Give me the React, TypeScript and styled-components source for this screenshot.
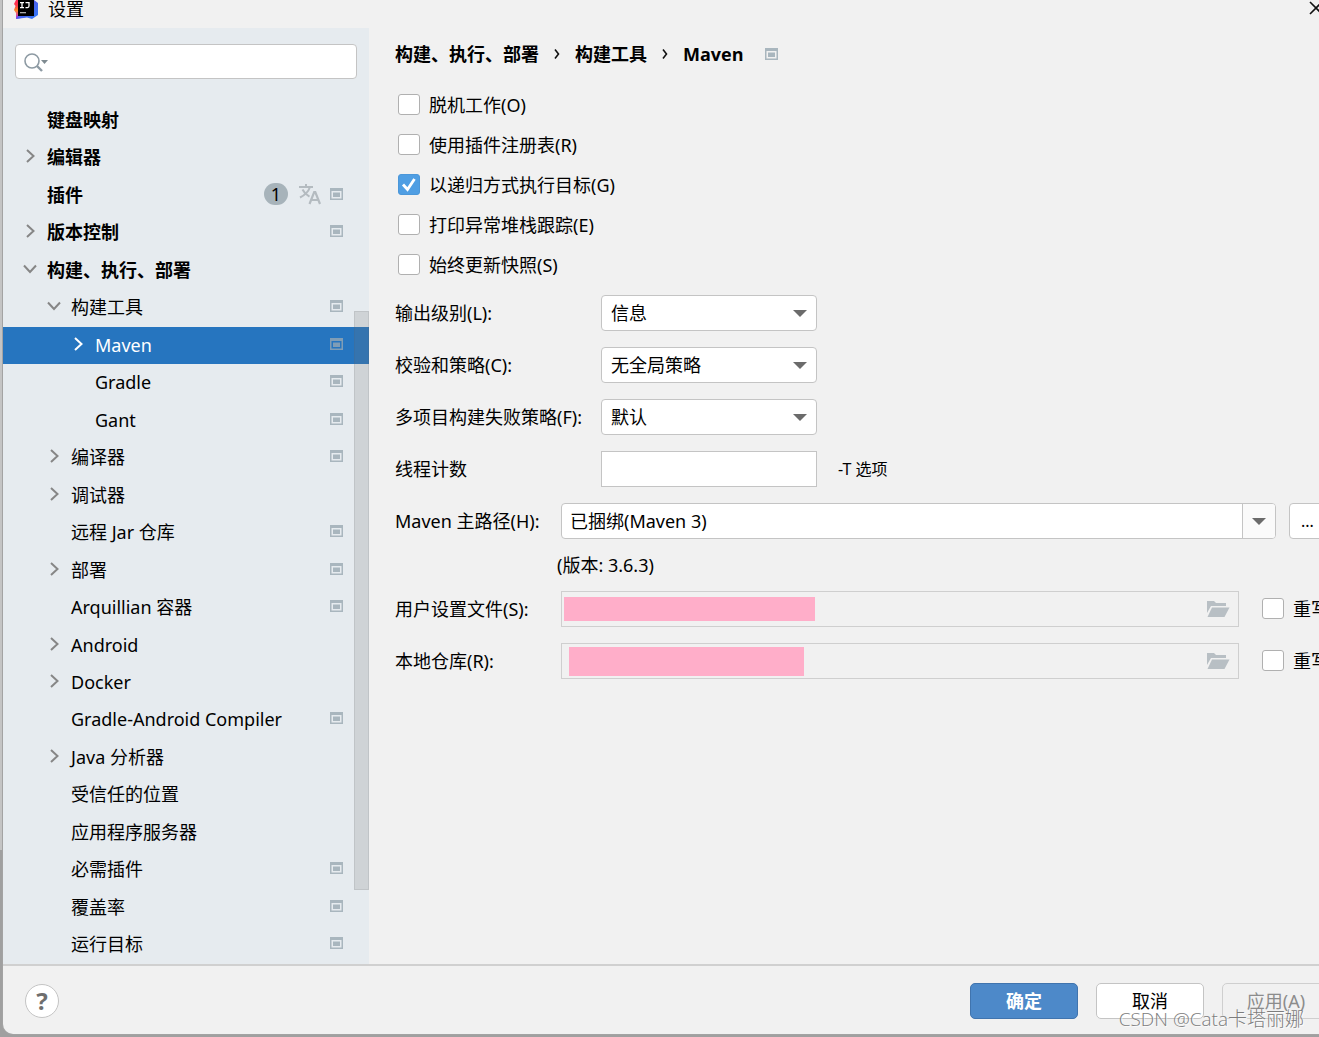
import React, { useState } from "react";
import styled, { createGlobalStyle } from "styled-components";

const GlobalStyle = createGlobalStyle`
  *, *::before, *::after { box-sizing: border-box; }
  body { margin: 0; background: #b4b4b4; }
  body, button, input, select {
    font-family: "Noto Sans", "Noto Sans CJK SC", sans-serif;
    font-size: 18px;
    line-height: 24px;
    color: #000;
  }
`;

const Desktop = styled.div`
  display: flex;
  position: relative;
  min-height: 100vh;
  overflow: hidden;
  padding: 0 0 3px 3px;
  background: linear-gradient(to bottom, #c4c4c4 0 82%, #a0a0a0 82% 100%);
`;

/* The dialog is a little wider than the screen and runs off its right edge. */
const Dialog = styled.div`
  display: flex;
  flex-direction: column;
  flex: none;
  width: calc(100% + 24px);
  background: #f1f1f1;
  border-bottom-left-radius: 10px;
  box-shadow: 0 0 0 1px #a3a3a3;
`;

const TitleBar = styled.header`
  display: flex;
  align-items: flex-start;
  justify-content: space-between;
  height: 28px;
  padding: 0 20px 0 11px;
`;

const Title = styled.h1`
  display: flex;
  gap: 10px;
  margin: 0;
  font-size: 18px;
  font-weight: 400;
  line-height: 18px;
`;

const IconButton = styled.button`
  display: flex;
  align-items: center;
  justify-content: center;
  flex: none;
  padding: 0;
  border: 0;
  background: transparent;
`;

const Body = styled.div`
  display: flex;
  flex: 1;
`;

const Sidebar = styled.aside`
  position: relative;
  display: flex;
  flex-direction: column;
  flex: none;
  width: 366px;
  padding-top: 16px;
  background: #e6ebef;
`;

const SearchBox = styled.label`
  display: flex;
  align-items: center;
  gap: 4px;
  height: 35px;
  margin: 0 12px 23px;
  padding-left: 8px;
  background: #fff;
  border: 1px solid #c4c4c4;
  border-radius: 4px;
`;

const BareInput = styled.input`
  flex: 1;
  min-width: 0;
  padding: 0 0 0 8px;
  border: 0;
  outline: 0;
  background: transparent;
`;

const Tree = styled.ul`
  display: flex;
  flex-direction: column;
  flex: 1;
  margin: 0;
  padding: 0;
  list-style: none;
`;

const TreeItem = styled.li`
  display: flex;
  flex: 1;
  min-height: 34px;
`;

const TreeRow = styled.button<{ $level: number; $selected: boolean }>`
  display: flex;
  align-items: center;
  gap: 9px;
  flex: 1;
  padding: 0 26px 2px ${(p) => 19 + 24 * p.$level}px;
  border: 0;
  text-align: left;
  font-weight: ${(p) => (p.$level === 0 ? 700 : 400)};
  color: ${(p) => (p.$selected ? "#fff" : "#000")};
  background: ${(p) => (p.$selected ? "#2675bf" : "transparent")};
  svg { margin-bottom: 2px; }
`;

const TreeLabel = styled.span`
  flex: 1;
  white-space: nowrap;
`;

const Count = styled.span`
  width: 24px;
  margin: 0 2px 2px 0;
  border-radius: 11px;
  background: #a7b3ba;
  font-weight: 400;
  line-height: 22px;
  text-align: center;
`;

const ScrollThumb = styled.div`
  position: absolute;
  top: 283px;
  right: 0;
  width: 15px;
  height: 579px;
  background: rgba(115, 115, 115, 0.2);
  border: 1px solid rgba(89, 89, 89, 0.12);
`;

const Main = styled.main`
  flex: 1;
  min-width: 0;
  padding: 14px 12px 0 26px;
`;

const Breadcrumb = styled.nav`
  display: flex;
  align-items: center;
  gap: 15px;
  margin-bottom: 27px;
  font-family: "Open Sans", "Noto Sans CJK SC", sans-serif;
  font-weight: 700;
  svg:last-child { margin-left: 6px; }
`;

const CheckList = styled.div`
  display: flex;
  flex-direction: column;
  gap: 16px;
  margin-bottom: 18px;
  padding-left: 3px;
`;

const CheckLabel = styled.label`
  display: flex;
  align-items: center;
  gap: 9px;
  white-space: nowrap;
`;

const CheckInput = styled.input`
  appearance: none;
  flex: none;
  width: 22px;
  height: 21px;
  margin: 0;
  border: 1px solid #b0b0b0;
  border-radius: 3px;
  background: #fff;
  &:checked {
    border-color: #4b97d9;
    background: #4f9ee3;
  }
`;

const CheckBoxHolder = styled.span`
  position: relative;
  display: flex;
  margin-bottom: 2px;
  svg {
    position: absolute;
    inset: 0;
    pointer-events: none;
  }
`;

const Form = styled.div`
  display: flex;
  flex-direction: column;
  gap: 16px;
`;

const Row = styled.div<{ $labelWidth: number }>`
  display: grid;
  grid-template-columns: ${(p) => p.$labelWidth}px 1fr;
  align-items: center;
  height: 36px;
  > label { white-space: nowrap; }
`;

const Controls = styled.div<{ $gap: number }>`
  display: flex;
  align-items: center;
  gap: ${(p) => p.$gap}px;
`;

const SelectHolder = styled.div`
  position: relative;
  width: 216px;
  svg {
    position: absolute;
    top: 15px;
    right: 10px;
    pointer-events: none;
  }
`;

const Select = styled.select`
  appearance: none;
  display: block;
  width: 100%;
  height: 36px;
  padding: 0 32px 0 9px;
  border: 1px solid #c4c4c4;
  border-radius: 4px;
  background: #fff;
`;

const TextInput = styled.input`
  width: 216px;
  height: 36px;
  padding: 0 8px;
  border: 1px solid #c4c4c4;
  background: #fff;
`;

const Small = styled.span`
  font-size: 16px;
`;

const Combo = styled.div`
  display: flex;
  flex: 1;
  height: 36px;
  border: 1px solid #c4c4c4;
  border-radius: 4px;
  background: #fff;
  overflow: hidden;
`;

const ComboButton = styled(IconButton)`
  width: 33px;
  border-left: 1px solid #c4c4c4;
  background: #fafafa;
`;

const BrowseButton = styled.button`
  flex: none;
  width: 42px;
  height: 36px;
  padding: 0 0 0 11px;
  border: 1px solid #c4c4c4;
  border-radius: 4px;
  background: #fff;
  font-size: 16px;
  text-align: left;
`;

const Hint = styled.p`
  margin: 0 0 0 162px;
  line-height: 20px;
`;

const PathField = styled.div`
  display: flex;
  align-items: center;
  flex: 1;
  height: 36px;
  padding: 0 8px 0 2px;
  border: 1px solid #cfcfcf;
`;

const Redaction = styled.span<{ $width: number; $height: number; $indent: number }>`
  width: ${(p) => p.$width}px;
  height: ${(p) => p.$height}px;
  margin-left: ${(p) => p.$indent}px;
  background: #ffaec9;
`;

const Override = styled.div`
  flex: none;
  width: 69px;
`;

const Footer = styled.footer`
  display: flex;
  align-items: center;
  gap: 18px;
  height: 70px;
  padding: 2px 13px 0 22px;
  border-top: 2px solid #d0d0d0;
`;

const HelpButton = styled.button`
  width: 34px;
  height: 34px;
  margin-right: auto;
  padding: 0;
  border: 1px solid #c4c4c4;
  border-radius: 50%;
  background: #fff;
  color: #6e6e6e;
  font-size: 24px;
  font-weight: 700;
`;

const FooterButton = styled.button<{ $kind: "primary" | "normal" | "disabled" }>`
  width: 108px;
  height: 36px;
  padding: 0;
  border-radius: 5px;
  border: 1px solid ${(p) => (p.$kind === "primary" ? "#4074ae" : p.$kind === "normal" ? "#c4c4c4" : "#cfcfcf")};
  background: ${(p) => (p.$kind === "primary" ? "#4d89c9" : p.$kind === "normal" ? "#fff" : "transparent")};
  color: ${(p) => (p.$kind === "primary" ? "#fff" : p.$kind === "normal" ? "#000" : "#8c8c8c")};
  font-weight: ${(p) => (p.$kind === "primary" ? 700 : 400)};
`;

const Watermark = styled.div`
  position: absolute;
  right: 15px;
  bottom: 6px;
  font-family: "Open Sans", "Noto Sans CJK SC", sans-serif;
  font-size: 19px;
  font-weight: 300;
  color: #7d7d7d;
  text-shadow: 1px 1px 0 rgba(255, 255, 255, 0.8);
  white-space: nowrap;
  pointer-events: none;
`;

const ProjectIcon = ({ color = "#a9b6be" }: { color?: string }) => (
  <svg width="13" height="12" viewBox="0 0 13 12" aria-hidden="true">
    <path fillRule="evenodd" fill={color} d="M0 0h13v12H0zM1.5 3v7.5h10V3z" />
    <path fill={color} d="M3 4.5h7V9H3z" />
  </svg>
);

const TranslateIcon = () => (
  <svg width="22" height="22" viewBox="0 0 22 22" fill="none" stroke="#b4bbc0" strokeWidth="2" aria-hidden="true">
    <path d="M0 4h14M7 1v3M11 4c-1.500 4.500-5 8-10 10.500M3.500 6.500c1.500 3 4 5.500 7 7.200" />
    <path d="M10.500 21l4.700-12h1.100L21 21M12 17h7.500" strokeWidth="2.200" />
  </svg>
);

const Chevron = ({ open, color }: { open: boolean; color: string }) => (
  <svg width="16" height="16" viewBox="0 0 16 16" fill="none" stroke={color} strokeWidth="2" aria-hidden="true">
    <path d={open ? "M2 4.5l6 6.5 6-6.5" : "M5 2l6.5 6L5 14"} />
  </svg>
);

const Separator = () => (
  <svg width="6" height="12" viewBox="0 0 6 12" fill="none" stroke="#111" strokeWidth="1.600" aria-hidden="true">
    <path d="M1 1.500l3.500 4.500L1 10.500" />
  </svg>
);

const Caret = ({ width = 14, color = "#6b6b6b" }: { width?: number; color?: string }) => (
  <svg width={width} height={width / 2} viewBox="0 0 14 7" aria-hidden="true">
    <path d="M0 0h14L7 7z" fill={color} />
  </svg>
);

const SearchIcon = () => (
  <svg width="24" height="20" viewBox="0 0 24 20" fill="none" aria-hidden="true">
    <circle cx="8" cy="9" r="7" stroke="#8d9aa3" strokeWidth="1.6" />
    <path d="M13 14l5 5" stroke="#8d9aa3" strokeWidth="2.4" />
    <path d="M17 8h7l-3.5 4z" fill="#7f8b91" />
  </svg>
);

const FolderIcon = () => (
  <svg width="24" height="18" viewBox="0 0 24 18" fill="#b8bfc4" aria-hidden="true">
    <path d="M1 1h7l2 2h10v3H5L1 13z" />
    <path d="M6 7.500h17.500L18.500 17H1.500z" />
  </svg>
);

const Logo = () => (
  <svg width="24" height="19" viewBox="0 0 24 19" aria-hidden="true">
    <defs>
      <linearGradient id="flame" x1="0" y1="0" x2="0" y2="1">
        <stop offset="0" stopColor="#fe2857" />
        <stop offset="0.3" stopColor="#fc3a4a" />
        <stop offset="0.55" stopColor="#fb8a26" />
        <stop offset="0.75" stopColor="#e8568a" />
        <stop offset="0.9" stopColor="#9a3bdc" />
      </linearGradient>
      <linearGradient id="sky" x1="0" y1="0" x2="1" y2="1">
        <stop offset="0" stopColor="#a44af7" />
        <stop offset="0.5" stopColor="#4a62ee" />
        <stop offset="1" stopColor="#2f7cf8" />
      </linearGradient>
    </defs>
    <path d="M2 0h10v17l-10 2V13L0 10l1.500-4L0 4z" fill="url(#flame)" />
    <path d="M12 0h8l4 3v12l-6 4-5-1.500L2 19l3-4z" fill="url(#sky)" />
    <path d="M4 0h16v16H4z" fill="#000" />
    <path d="M6 2.600h4M8 2.600v5M6 7.600h4M11.500 2.600H15v3.500q0 1.500-1.500 1.500h-2" stroke="#fff" strokeWidth="1.300" fill="none" />
    <path d="M6 12h6v1.300H6z" fill="#aaa" />
  </svg>
);

type Node = {
  name: string;
  level: number;
  arrow?: "open" | "closed";
  project?: boolean;
  count?: number;
};

const nodes: Node[] = [
  { name: "键盘映射", level: 0 },
  { name: "编辑器", level: 0, arrow: "closed" },
  { name: "插件", level: 0, project: true, count: 1 },
  { name: "版本控制", level: 0, arrow: "closed", project: true },
  { name: "构建、执行、部署", level: 0, arrow: "open" },
  { name: "构建工具", level: 1, arrow: "open", project: true },
  { name: "Maven", level: 2, arrow: "closed", project: true },
  { name: "Gradle", level: 2, project: true },
  { name: "Gant", level: 2, project: true },
  { name: "编译器", level: 1, arrow: "closed", project: true },
  { name: "调试器", level: 1, arrow: "closed" },
  { name: "远程 Jar 仓库", level: 1, project: true },
  { name: "部署", level: 1, arrow: "closed", project: true },
  { name: "Arquillian 容器", level: 1, project: true },
  { name: "Android", level: 1, arrow: "closed" },
  { name: "Docker", level: 1, arrow: "closed" },
  { name: "Gradle-Android Compiler", level: 1, project: true },
  { name: "Java 分析器", level: 1, arrow: "closed" },
  { name: "受信任的位置", level: 1 },
  { name: "应用程序服务器", level: 1 },
  { name: "必需插件", level: 1, project: true },
  { name: "覆盖率", level: 1, project: true },
  { name: "运行目标", level: 1, project: true },
];

const options = [
  { label: "脱机工作(O)", on: false },
  { label: "使用插件注册表(R)", on: false },
  { label: "以递归方式执行目标(G)", on: true },
  { label: "打印异常堆栈跟踪(E)", on: false },
  { label: "始终更新快照(S)", on: false },
];

const selects = [
  { id: "output", label: "输出级别(L):", value: "信息" },
  { id: "checksum", label: "校验和策略(C):", value: "无全局策略" },
  { id: "fail", label: "多项目构建失败策略(F):", value: "默认" },
];

const paths = [
  { id: "settings", label: "用户设置文件(S):", width: 251, height: 24, indent: 0 },
  { id: "repository", label: "本地仓库(R):", width: 235, height: 29, indent: 5 },
];

function Check({ label, on }: { label: string; on: boolean }) {
  const [checked, setChecked] = useState(on);
  return (
    <CheckLabel>
      <CheckBoxHolder>
        <CheckInput type="checkbox" checked={checked} onChange={() => setChecked(!checked)} />
        {checked && (
          <svg width="22" height="21" viewBox="0 0 22 21" fill="none" aria-hidden="true">
            <path d="M5 10.500l4.500 5L16.500 5" stroke="#fff" strokeWidth="2.800" />
          </svg>
        )}
      </CheckBoxHolder>
      {label}
    </CheckLabel>
  );
}

export default function App() {
  const [selected, setSelected] = useState("Maven");
  return (
    <>
      <GlobalStyle />
      <Desktop>
        <Dialog>
          <TitleBar>
            <Title>
              <Logo />
              设置
            </Title>
            <IconButton aria-label="关闭">
              <svg width="14" height="16" viewBox="0 0 14 16" stroke="#111" strokeWidth="1.600">
                <path d="M1 2l12 12M13 2L1 14" />
              </svg>
            </IconButton>
          </TitleBar>
          <Body>
            <Sidebar>
              <SearchBox>
                <SearchIcon />
                <BareInput type="text" aria-label="搜索" />
              </SearchBox>
              <Tree>
                {nodes.map((n) => {
                  const active = n.name === selected;
                  return (
                    <TreeItem key={n.name}>
                      <TreeRow $level={n.level} $selected={active} onClick={() => setSelected(n.name)}>
                        {n.arrow ? (
                          <Chevron open={n.arrow === "open"} color={active ? "#fff" : "#868686"} />
                        ) : (
                          <svg width="16" height="16" aria-hidden="true" />
                        )}
                        <TreeLabel>{n.name}</TreeLabel>
                        {n.count && <Count>{n.count}</Count>}
                        {n.count && <TranslateIcon />}
                        {n.project && <ProjectIcon color={active ? "#7f9db6" : undefined} />}
                      </TreeRow>
                    </TreeItem>
                  );
                })}
              </Tree>
              <ScrollThumb />
            </Sidebar>
            <Main>
              <Breadcrumb>
                <span>构建、执行、部署</span>
                <Separator />
                <span>构建工具</span>
                <Separator />
                <span>Maven</span>
                <ProjectIcon />
              </Breadcrumb>
              <CheckList>
                {options.map((o) => (
                  <Check key={o.label} {...o} />
                ))}
              </CheckList>
              <Form>
                {selects.map((s) => (
                  <Row key={s.id} $labelWidth={206}>
                    <label htmlFor={s.id}>{s.label}</label>
                    <SelectHolder>
                      <Select id={s.id}>
                        <option>{s.value}</option>
                      </Select>
                      <Caret />
                    </SelectHolder>
                  </Row>
                ))}
                <Row $labelWidth={206}>
                  <label htmlFor="threads">线程计数</label>
                  <Controls $gap={21}>
                    <TextInput id="threads" type="text" />
                    <Small>-T 选项</Small>
                  </Controls>
                </Row>
                <Row $labelWidth={166}>
                  <label htmlFor="home">Maven 主路径(H):</label>
                  <Controls $gap={13}>
                    <Combo>
                      <BareInput id="home" type="text" defaultValue="已捆绑(Maven 3)" />
                      <ComboButton aria-label="展开">
                        <Caret />
                      </ComboButton>
                    </Combo>
                    <BrowseButton>...</BrowseButton>
                  </Controls>
                </Row>
                <Hint>(版本: 3.6.3)</Hint>
                {paths.map((p) => (
                  <Row key={p.id} $labelWidth={166}>
                    <label htmlFor={p.id}>{p.label}</label>
                    <Controls $gap={23}>
                      <PathField>
                        <Redaction $width={p.width} $height={p.height} $indent={p.indent} />
                        <BareInput id={p.id} type="text" disabled />
                        <IconButton aria-label="浏览">
                          <FolderIcon />
                        </IconButton>
                      </PathField>
                      <Override>
                        <Check label="重写" on={false} />
                      </Override>
                    </Controls>
                  </Row>
                ))}
              </Form>
            </Main>
          </Body>
          <Footer>
            <HelpButton aria-label="帮助">?</HelpButton>
            <FooterButton $kind="primary">确定</FooterButton>
            <FooterButton $kind="normal">取消</FooterButton>
            <FooterButton $kind="disabled" disabled>
              应用(A)
            </FooterButton>
          </Footer>
        </Dialog>
        <Watermark>CSDN @Cata卡塔丽娜</Watermark>
      </Desktop>
    </>
  );
}
